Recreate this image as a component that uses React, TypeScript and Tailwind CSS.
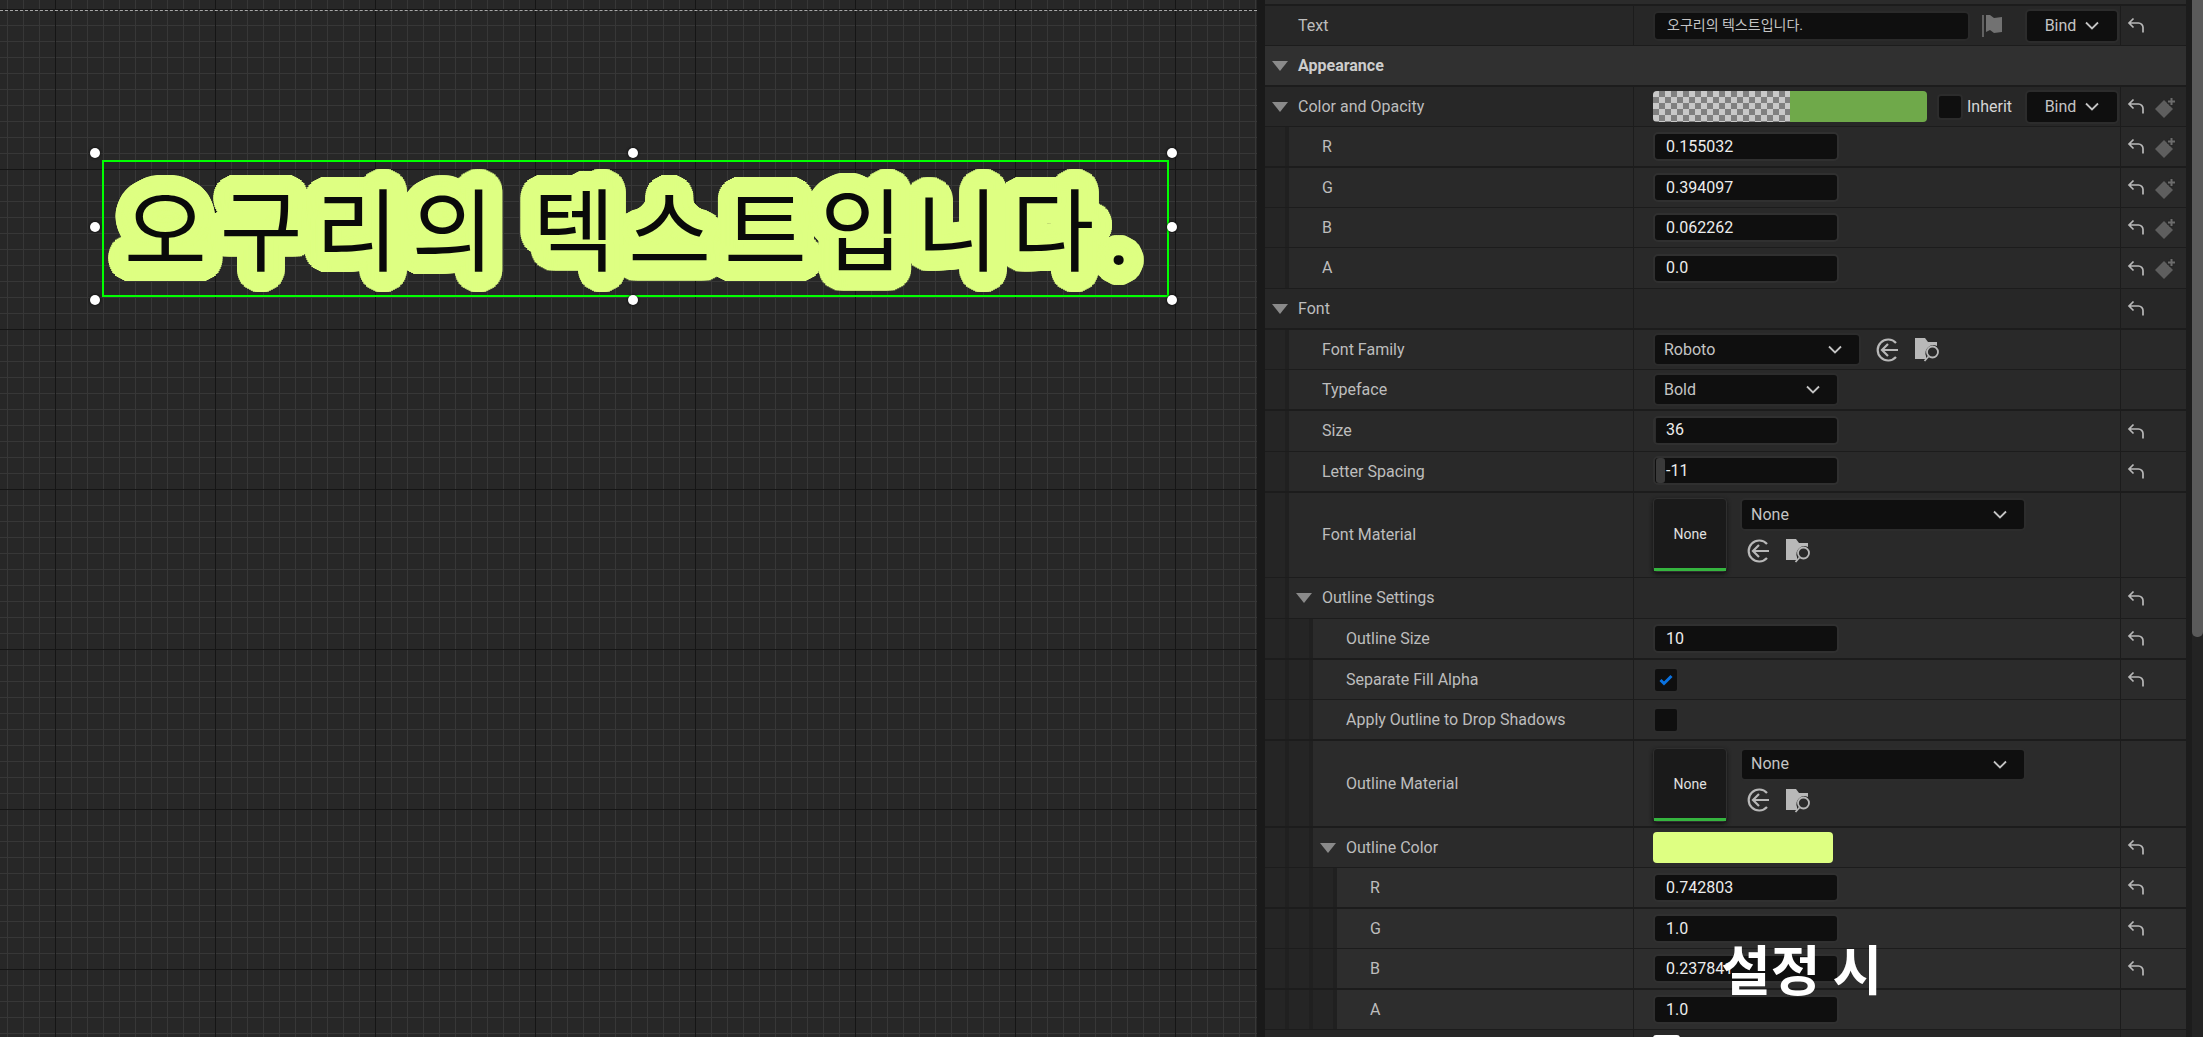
import type { ReactNode } from "react"

const KO = "font-['Roboto','Noto_Sans_CJK_KR',sans-serif]"

// rings of offset shadows give the big preview text its round outline
function outlineShadow(color: string) {
  const parts: string[] = []
  for (const r of [4, 9, 14, 18, 20]) {
    const n = r * 3
    for (let i = 0; i < n; i++) {
      const a = (i / n) * Math.PI * 2
      parts.push(`${(Math.cos(a) * r).toFixed(1)}px ${(Math.sin(a) * r).toFixed(1)}px 0 ${color}`)
    }
  }
  return parts.join(",")
}

function Handle({ className }: { className: string }) {
  return <div className={`absolute w-[10px] h-[10px] rounded-full bg-white shadow-[0_0_3px_#000] ${className}`} />
}

function Canvas() {
  return (
    <div className="relative w-[1257px] h-full shrink-0 overflow-hidden bg-[#272727] bg-[linear-gradient(to_right,#151515_1px,transparent_1px),linear-gradient(to_bottom,#151515_1px,transparent_1px),linear-gradient(to_right,#373737_1px,transparent_1px),linear-gradient(to_bottom,#373737_1px,transparent_1px)] [background-size:160px_160px,160px_160px,16px_16px,16px_16px] [background-position:55px_0,0_9px,7px_0,0_9px]">
      {/* safe zone line */}
      <div className="absolute left-0 right-0 top-[10px] border-t border-dashed border-[#a8a8a8]" />
      <div className="absolute left-[102px] top-[160px] w-[1067px] h-[137px] border-2 border-[#00ff00] flex items-center">
        <span
          className={`ml-[20px] mt-[10px] whitespace-nowrap ${KO} text-[90px] leading-none tracking-[13px] [word-spacing:-10px] text-[#0a0a0a]`}
          style={{ textShadow: outlineShadow("#deff82") }}
        >
          오구리의 텍스트입니다.
        </span>
      </div>
      <Handle className="left-[90px] top-[148px]" />
      <Handle className="left-[628px] top-[148px]" />
      <Handle className="left-[1167px] top-[148px]" />
      <Handle className="left-[90px] top-[222px]" />
      <Handle className="left-[1167px] top-[222px]" />
      <Handle className="left-[90px] top-[295px]" />
      <Handle className="left-[628px] top-[295px]" />
      <Handle className="left-[1167px] top-[295px]" />
    </div>
  )
}

function Triangle() {
  return (
    <svg width="16" height="10" viewBox="0 0 16 10" className="shrink-0">
      <polygon points="0,0 16,0 8,10" fill="#8a8a8a" />
    </svg>
  )
}

function Chevron() {
  return (
    <svg width="14" height="9" viewBox="0 0 14 9" fill="none" stroke="#c4c4c4" strokeWidth="1.8" className="shrink-0">
      <path d="M1 1.5 7 7.5l6-6" />
    </svg>
  )
}

function ResetIcon() {
  return (
    <svg width="18" height="17" viewBox="0 0 18 17" fill="none" stroke="#b8b8b8" strokeWidth="1.7" className="shrink-0">
      <path d="M6.5 1.5 2 6l4.5 4.5M2 6h9.5a4.5 4.5 0 0 1 4.5 4.5V15.5" />
    </svg>
  )
}

function KeyIcon() {
  return (
    <svg width="23" height="24" viewBox="0 0 23 24" className="shrink-0">
      <path d="M10 5 19 14 10 23 1 14Z" fill="#5e5e5e" />
      <path d="M13 6.5h9M17.5 2v9" stroke="#272727" strokeWidth="4" />
      <path d="M14 6.5h7M17.5 3v7" stroke="#6c6c6c" strokeWidth="2" />
    </svg>
  )
}

function BrowseIcon() {
  return (
    <svg width="23" height="24" viewBox="0 0 23 24" fill="none" stroke="#b8b8b8" strokeWidth="2.2" className="shrink-0">
      <path d="M20 5A10.5 10.5 0 1 0 20 19" />
      <path d="M12 6 6 12l6 6M6 12h16" />
    </svg>
  )
}

function FolderSearchIcon() {
  return (
    <svg width="25" height="25" viewBox="0 0 25 25" fill="none" className="shrink-0">
      <path d="M0 1h10l3 4h9v4a8 8 0 0 0-11 10v3H0Z" fill="#b8b8b8" />
      <circle cx="17.5" cy="15" r="5.5" stroke="#b8b8b8" strokeWidth="1.8" />
      <path d="M13.5 19.5 9.5 24" stroke="#b8b8b8" strokeWidth="1.8" />
    </svg>
  )
}

function BindButton() {
  return (
    <div className="ml-auto flex items-center justify-center gap-[9px] w-[94px] h-[34px] rounded-[5px] bg-[#0f0f0f] border-2 border-[#2c2c2c] text-[#c4c4c4]">
      Bind
      <Chevron />
    </div>
  )
}

function NumberField({ value, className = "" }: { value: string; className?: string }) {
  return (
    <div className={`flex items-center w-[186px] h-[29px] rounded-[5px] bg-[#0f0f0f] border-2 border-[#303030] pl-[11px] text-[#ececec] ${className}`}>
      {value}
    </div>
  )
}

function Dropdown({ value, width }: { value: string; width: string }) {
  return (
    <div className={`flex items-center justify-between h-[33px] rounded-[5px] bg-[#0f0f0f] border-2 border-[#2c2c2c] pl-[9px] pr-[17px] text-[#c4c4c4] ${width}`}>
      {value}
      <Chevron />
    </div>
  )
}

function MaterialPicker({ className = "" }: { className?: string }) {
  return (
    <div className={`flex gap-[13px] ${className}`}>
      <div className="flex flex-col justify-between w-[74px] h-[74px] rounded-[4px] bg-[#1a1a1a] border border-[#2f2f2f] shadow-[0_2px_4px_#111] text-[#e0e0e0] text-[14px]">
        <div className="flex-1 flex items-center justify-center pt-[2px]">None</div>
        <div className="h-[3px] bg-[#35b53f]" />
      </div>
      <div className="flex flex-col">
        <Dropdown value="None" width="w-[286px]" />
        <div className="flex items-center gap-[16px] mt-[7px] ml-[7px]">
          <BrowseIcon />
          <FolderSearchIcon />
        </div>
      </div>
    </div>
  )
}

function Checkbox({ checked = false, className = "" }: { checked?: boolean; className?: string }) {
  return (
    <div className={`flex items-center justify-center w-[26px] h-[26px] rounded-[4px] bg-[#0f0f0f] border-2 border-[#2c2c2c] ${className}`}>
      {checked && (
        <svg width="14" height="12" viewBox="0 0 14 12" fill="none" stroke="#0a72e0" strokeWidth="3">
          <path d="M1.5 6 5 9.5 12.5 2" />
        </svg>
      )}
    </div>
  )
}

type RowProps = {
  h: string
  level?: 0 | 1 | 2 | 3
  thick?: boolean
  arrow?: boolean
  header?: boolean
  label?: string
  reset?: boolean
  keyed?: boolean
  children?: ReactNode
}

const levelBg = ["bg-[#272727]", "bg-[#292929]", "bg-[#2b2b2b]", "bg-[#2d2d2d]"]

function Row({ h, level = 0, thick, arrow, header, label, reset, keyed, children }: RowProps) {
  const bg = header ? "bg-[#303030]" : levelBg[level]
  return (
    <div className={`flex shrink-0 border-[#1c1c1c] ${h} ${thick ? "border-b-2" : "border-b"} ${bg}`}>
      <div className="flex w-[368px] shrink-0">
        {Array.from({ length: level }).map((_, i) => (
          <div key={i} className="w-[24px] shrink-0 bg-[#252525] border-r-4 border-[#202020]" />
        ))}
        <div className={`flex items-center ${arrow ? "pl-[7px] gap-[10px]" : "pl-[33px]"} ${header ? "font-bold text-[#cdcdcd]" : "text-[#bdbdbd]"}`}>
          {arrow && <Triangle />}
          {label}
        </div>
      </div>
      <div className={`flex items-center w-[487px] shrink-0 pl-[19px] pr-[1px] ${header ? "" : "border-l border-[#1c1c1c]"}`}>{children}</div>
      <div className={`flex items-center w-[66px] shrink-0 pl-[6px] gap-[9px] ${header ? "" : "border-l border-[#1c1c1c]"}`}>
        {reset && <ResetIcon />}
        {keyed && <KeyIcon />}
      </div>
    </div>
  )
}

function DetailsPanel() {
  return (
    <div className={`flex flex-col w-[921px] shrink-0 h-full overflow-hidden bg-[#272727] text-[16px] ${KO}`}>
      <div className="h-[6px] shrink-0 bg-[#2b2b2b] border-b-2 border-[#1c1c1c]" />
      <Row h="h-[40px]" label="Text" reset>
        <div className="flex items-center w-[317px] h-[30px] rounded-[5px] bg-[#0f0f0f] border-2 border-[#2a2a2a] pl-[12px] text-[#c4c4c4] text-[14px]">
          오구리의 텍스트입니다.
        </div>
        <svg width="21" height="24" viewBox="0 0 21 24" className="ml-[12px]">
          <path d="M1 1v22" stroke="#8a8a8a" strokeWidth="1.2" />
          <path d="M4 1h4l4 3 8-1v15l-8 1-4-3-4 2Z" fill="#727272" />
        </svg>
        <BindButton />
      </Row>
      <Row h="h-[41px]" thick header arrow label="Appearance" />
      <Row h="h-[40px]" arrow label="Color and Opacity" reset keyed>
        <div className="flex w-[274px] h-[31px] rounded-[4px] overflow-hidden">
          <div className="w-[137px] bg-[repeating-conic-gradient(#808080_0_25%,#c8c8c8_0_50%)] bg-[length:12px_12px]" />
          <div className="w-[137px] bg-[#6fa94a]" />
        </div>
        <Checkbox className="ml-[10px]" />
        <span className="ml-[4px] text-[#d6d6d6]">Inherit</span>
        <BindButton />
      </Row>
      <Row h="h-[41px]" thick level={1} label="R" reset keyed><NumberField value="0.155032" /></Row>
      <Row h="h-[40px]" level={1} label="G" reset keyed><NumberField value="0.394097" /></Row>
      <Row h="h-[40px]" level={1} label="B" reset keyed><NumberField value="0.062262" /></Row>
      <Row h="h-[41px]" level={1} label="A" reset keyed><NumberField value="0.0" /></Row>
      <Row h="h-[41px]" thick arrow label="Font" reset />
      <Row h="h-[40px]" level={1} label="Font Family">
        <Dropdown value="Roboto" width="w-[208px]" />
        <div className="flex items-center gap-[16px] ml-[15px]">
          <BrowseIcon />
          <FolderSearchIcon />
        </div>
      </Row>
      <Row h="h-[41px]" thick level={1} label="Typeface"><Dropdown value="Bold" width="w-[186px]" /></Row>
      <Row h="h-[41px]" level={1} label="Size" reset>
        <div className="relative mb-[2px]">
          <NumberField value="36" />
          <div className="absolute left-[2px] top-[3px] w-px h-[23px] bg-[#2c2c2c]" />
        </div>
      </Row>
      <Row h="h-[41px]" thick level={1} label="Letter Spacing" reset>
        <div className="relative mb-[2px]">
          <NumberField value="-11" />
          <div className="absolute left-[3px] top-[2px] w-[9px] h-[25px] rounded-[3px] bg-[#3a3a3a]" />
        </div>
      </Row>
      <Row h="h-[85px]" level={1} label="Font Material"><MaterialPicker /></Row>
      <Row h="h-[41px]" level={1} arrow label="Outline Settings" reset />
      <Row h="h-[41px]" thick level={2} label="Outline Size" reset><NumberField value="10" /></Row>
      <Row h="h-[40px]" level={2} label="Separate Fill Alpha" reset><Checkbox checked /></Row>
      <Row h="h-[41px]" thick level={2} label="Apply Outline to Drop Shadows"><Checkbox /></Row>
      <Row h="h-[87px]" thick level={2} label="Outline Material"><MaterialPicker className="mt-[2px]" /></Row>
      <Row h="h-[40px]" level={2} arrow label="Outline Color" reset>
        <div className="w-[180px] h-[31px] rounded-[4px] bg-[#deff82]" />
      </Row>
      <Row h="h-[41px]" thick level={3} label="R" reset><NumberField value="0.742803" /></Row>
      <Row h="h-[40px]" level={3} label="G" reset><NumberField value="1.0" /></Row>
      <Row h="h-[41px]" thick level={3} label="B" reset><NumberField value="0.237841" /></Row>
      <Row h="h-[40px]" level={3} label="A"><NumberField value="1.0" /></Row>
      <Row h="h-[40px]">
        <div className="w-[27px] h-[26px] mt-[5px] rounded-[3px] bg-white self-start" />
      </Row>
    </div>
  )
}

export default function App() {
  return (
    <div className="relative flex w-[2203px] h-[1037px] overflow-hidden bg-[#1b1b1b]">
      <Canvas />
      <div className="w-[8px] shrink-0 bg-[#191919]" />
      <DetailsPanel />
      <div className="w-[6px] shrink-0 bg-[#1c1c1c]" />
      <div className="w-[11px] shrink-0 bg-[#232323]">
        <div className="h-[637px] rounded-b-[5px] bg-[#5a5a5a]" />
      </div>
      {/* caption burned into the screenshot */}
      <div className="absolute left-[1721px] top-[936px] font-['Noto_Sans_CJK_KR',sans-serif] font-bold text-[54px] leading-[64px] text-white whitespace-nowrap">
        설정 시
      </div>
    </div>
  )
}
